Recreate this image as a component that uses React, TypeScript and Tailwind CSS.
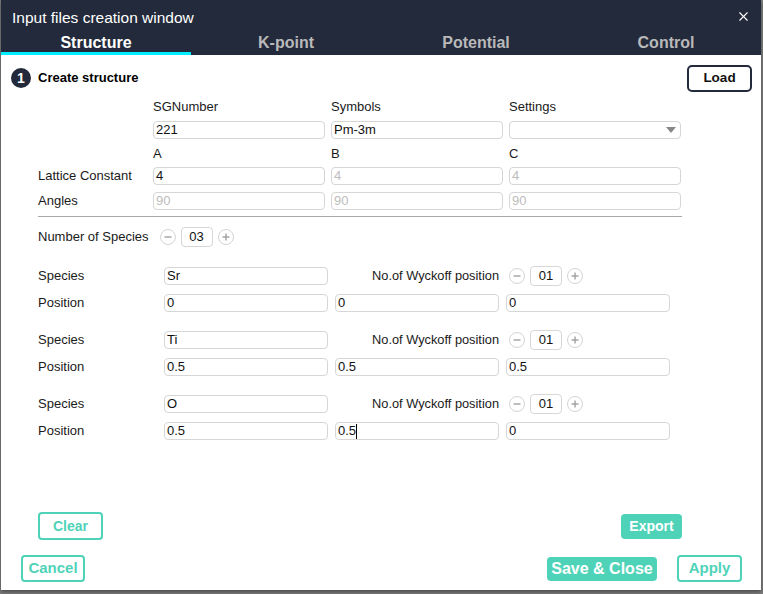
import { X } from "lucide-react";

const FONT = { fontFamily: '"Liberation Sans", Arial, sans-serif' };
const TABS = ["Structure", "K-point", "Potential", "Control"];

const SPECIES = [
  { name: "Sr", pos: ["0", "0", "0"] },
  { name: "Ti", pos: ["0.5", "0.5", "0.5"] },
  { name: "O", pos: ["0.5", "0.5", "0"] },
];

function Field({ value, muted = false, w = "w-full" }: { value: string; muted?: boolean; w?: string }) {
  return (
    <div
      className={`${w} h-[18px] rounded-[4px] border border-[#d6d6d6] px-[2px] flex items-center text-[13px] ${
        muted ? "text-[#bdbdbd]" : "text-[#111]"
      }`}
    >
      {value}
    </div>
  );
}

function Round({ plus = false }: { plus?: boolean }) {
  return (
    <div className="w-[16px] h-[16px] rounded-full border border-[#d4d4d4] flex items-center justify-center">
      <svg width="10" height="10" viewBox="0 0 10 10">
        <path d="M1.5 5h7" stroke="#9a9a9a" strokeWidth="1.3" />
        {plus && <path d="M5 1.5v7" stroke="#9a9a9a" strokeWidth="1.3" />}
      </svg>
    </div>
  );
}

function Stepper({ value }: { value: string }) {
  return (
    <div className="flex items-center gap-[5px]">
      <Round />
      <div className="w-[32px] h-[20px] rounded-[4px] border border-[#d6d6d6] flex items-center justify-center text-[13px] text-[#111]">
        {value}
      </div>
      <Round plus />
    </div>
  );
}

export default function App() {
  return (
    <div className="w-[763px] h-[594px] bg-[#7d7d7d] overflow-hidden" style={FONT}>
      <div className="ml-[1px] w-[760px] h-[590px] bg-white flex flex-col shadow-[0_2px_4px_rgba(0,0,0,0.4)]">
        {/* header */}
        <div className="bg-[#232a3b]">
          <div className="h-[33px] flex items-center justify-between pl-[11px] pr-[10px]">
            <span className="text-[15.5px] text-white pt-[2px]">Input files creation window</span>
            <X size={15} color="#ffffff" strokeWidth={1.8} />
          </div>
          <div className="flex h-[22px]">
            {TABS.map((t, i) => (
              <div
                key={t}
                className={`w-[190px] flex items-start justify-center text-[16px] font-bold leading-[20px] ${
                  i === 0 ? "text-white border-b-[3px] border-[#00eeff]" : "text-[#b9b9b9]"
                }`}
              >
                {t}
              </div>
            ))}
          </div>
        </div>

        {/* body */}
        <div className="flex-1 flex flex-col text-[13px] text-[#1a1a1a]">
          <div className="mt-[10px] h-[26px] flex items-center pl-[10px] pr-[9px]">
            <div className="w-[20px] h-[20px] rounded-full bg-[#232a3b] text-white text-[14px] font-bold flex items-center justify-center">
              1
            </div>
            <span className="ml-[7px] font-bold text-[13px] text-black">Create structure</span>
            <div className="ml-auto w-[65px] h-[27px] rounded-[5px] border-2 border-[#232a3b] flex items-center justify-center font-bold text-[13.5px] text-[#111]">
              Load
            </div>
          </div>

          <div className="ml-[37px] w-[644px] grid grid-cols-[109px_172px_172px_172px] gap-x-[6px]">
            <div className="mt-[7px] h-[18px]" />
            <div className="mt-[7px] h-[18px] flex items-center">SGNumber</div>
            <div className="mt-[7px] h-[18px] flex items-center">Symbols</div>
            <div className="mt-[7px] h-[18px] flex items-center">Settings</div>

            <div className="mt-[5px]" />
            <div className="mt-[5px]"><Field value="221" /></div>
            <div className="mt-[5px]"><Field value="Pm-3m" /></div>
            <div className="mt-[5px] h-[18px] rounded-[4px] border border-[#d6d6d6] flex items-center justify-end pr-[4px]">
              <svg width="10" height="6" viewBox="0 0 10 6">
                <path d="M0 0h10L5 6z" fill="#888" />
              </svg>
            </div>

            <div className="mt-[6px] h-[18px]" />
            <div className="mt-[6px] h-[18px] flex items-center">A</div>
            <div className="mt-[6px] h-[18px] flex items-center">B</div>
            <div className="mt-[6px] h-[18px] flex items-center">C</div>

            <div className="mt-[4px] h-[18px] flex items-center">Lattice Constant</div>
            <div className="mt-[4px]"><Field value="4" /></div>
            <div className="mt-[4px]"><Field value="4" muted /></div>
            <div className="mt-[4px]"><Field value="4" muted /></div>

            <div className="mt-[7px] h-[18px] flex items-center">Angles</div>
            <div className="mt-[7px]"><Field value="90" muted /></div>
            <div className="mt-[7px]"><Field value="90" muted /></div>
            <div className="mt-[7px]"><Field value="90" muted /></div>
          </div>

          <div className="ml-[37px] w-[644px] mt-[6px] border-t border-[#a8a8a8]" />

          <div className="ml-[37px] mt-[10px] h-[20px] flex items-center">
            <span>Number of Species</span>
            <div className="ml-[11px]">
              <Stepper value="03" />
            </div>
          </div>

          {SPECIES.map((s, idx) => (
            <div
              key={s.name}
              className={`ml-[37px] grid grid-cols-[119px_164px_164px_164px] gap-x-[7px] ${
                idx === 0 ? "mt-[19px]" : "mt-[18px]"
              }`}
            >
              <div className="h-[20px] flex items-center">Species</div>
              <div className="h-[20px] flex items-center"><Field value={s.name} /></div>
              <div className="h-[20px] flex items-center justify-end text-[12.8px]">No.of Wyckoff position</div>
              <div className="h-[20px] flex items-center pl-[3px]">
                <Stepper value="01" />
              </div>

              <div className="mt-[8px] h-[18px] flex items-center">Position</div>
              {s.pos.map((p, j) => (
                <div key={j} className="mt-[8px]">
                  <div className="h-[18px] rounded-[4px] border border-[#d6d6d6] px-[2px] flex items-center text-[13px] text-[#111]">
                    {p}
                    {idx === 2 && j === 1 && <span className="inline-block w-[1px] h-[15px] bg-black" />}
                  </div>
                </div>
              ))}
            </div>
          ))}

          <div className="mt-auto">
            <div className="ml-[37px] w-[644px] flex items-center justify-between">
              <div className="w-[65px] h-[28px] rounded-[4px] border-2 border-[#4fd3b8] flex items-center justify-center font-bold text-[14px] text-[#4fd3b8]">
                Clear
              </div>
              <div className="w-[61px] h-[25px] rounded-[4px] bg-[#4fd3b8] flex items-center justify-center font-bold text-[14px] text-white">
                Export
              </div>
            </div>
            <div className="mt-[15px] mb-[8px] ml-[20px] w-[721px] flex items-center">
              <div className="w-[64px] h-[27px] rounded-[4px] border-2 border-[#4fd3b8] flex items-center justify-center font-bold text-[15px] text-[#4fd3b8]">
                Cancel
              </div>
              <div className="ml-auto w-[110px] h-[24px] rounded-[4px] bg-[#4fd3b8] flex items-center justify-center font-bold text-[16px] text-white">
                Save &amp; Close
              </div>
              <div className="ml-[20px] w-[65px] h-[27px] rounded-[4px] border-2 border-[#4fd3b8] flex items-center justify-center font-bold text-[15px] text-[#4fd3b8]">
                Apply
              </div>
            </div>
          </div>
        </div>
      </div>
    </div>
  );
}
